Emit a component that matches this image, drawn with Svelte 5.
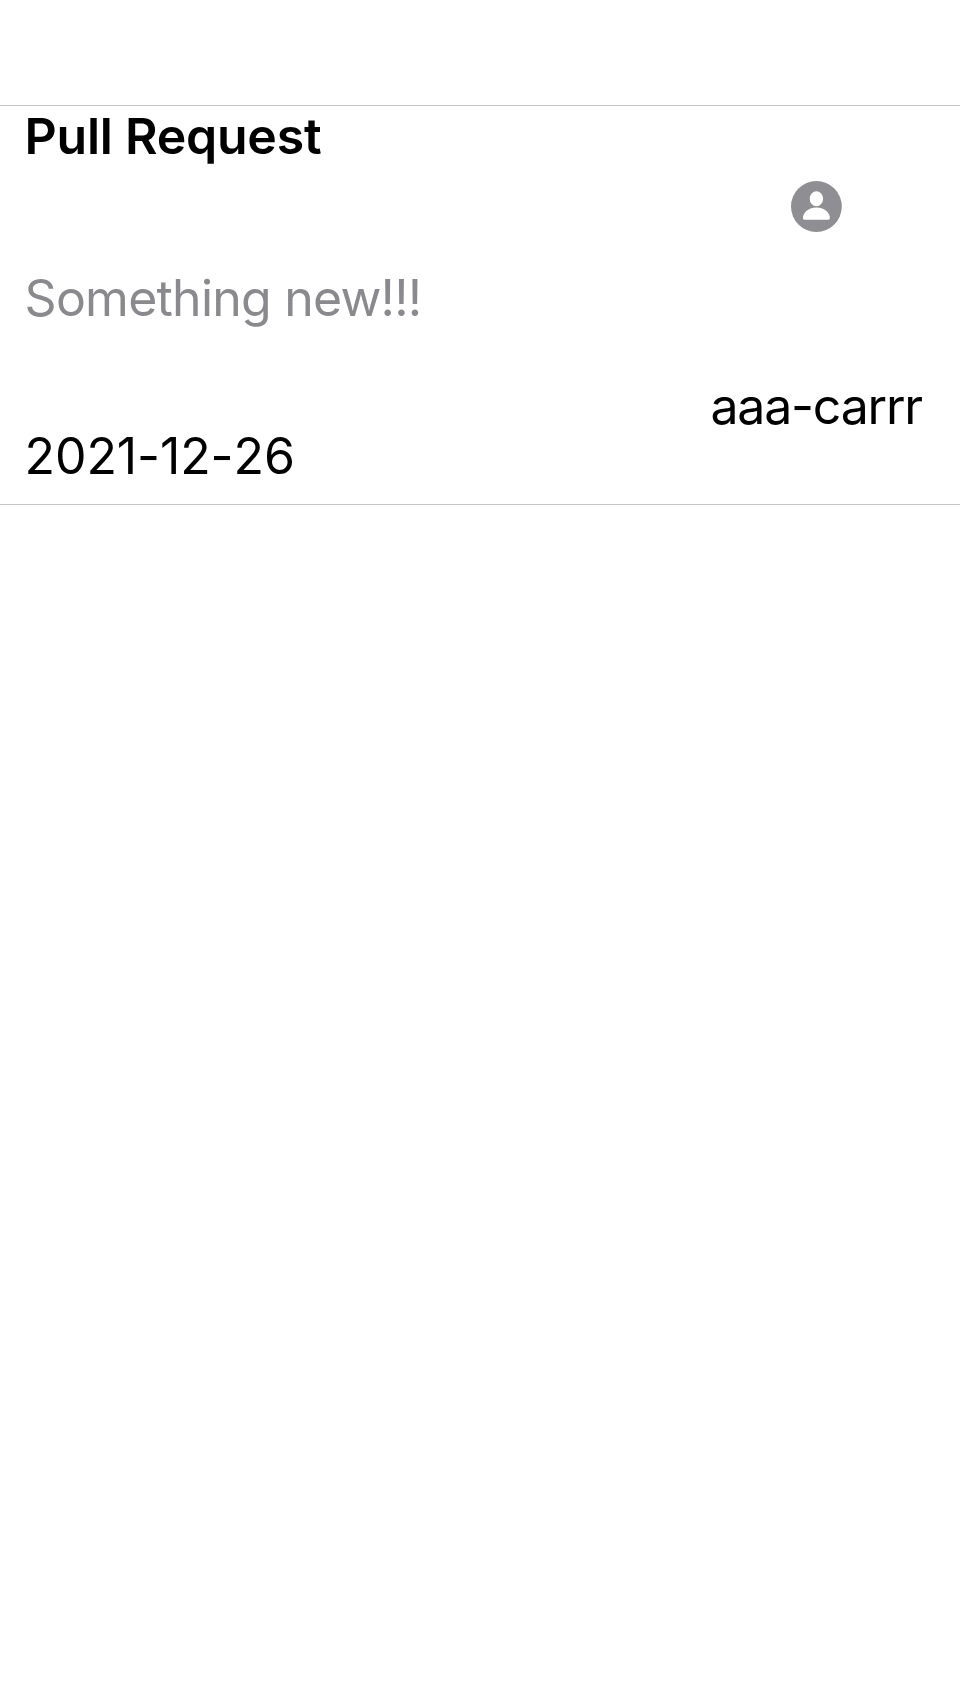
<script>
  const request = { title: 'Pull Request', body: 'Something new!!!', date: '2021-12-26', author: 'aaa-carrr' };
</script>

<main>
  <article>
    <section class="details">
      <h1><span>{request.title}</span></h1>
      <p><span>{request.body}</span></p>
      <time><span>{request.date}</span></time>
    </section>
    <section class="author">
      <svg viewBox="-0.9 0 52 52" aria-hidden="true">
        <circle cx="25.5" cy="25.5" r="25.4" />
        <ellipse class="person" cx="25.5" cy="17.8" rx="6.7" ry="7.5" />
        <path class="person" d="M12 36.8C12 32.7 16.5 26.5 25.5 26.5S39 32.7 39 36.8Q39 38.7 37.5 38.7H13.5Q12 38.7 12 36.8Z" />
      </svg>
      <span class="name">{request.author}</span>
    </section>
  </article>
</main>

<style>
  :global(body) { background: #fff; }
  main { box-sizing: border-box; min-height: 1704px; padding-top: 105px; font-family: Inter, sans-serif; color: #000; font-feature-settings: "calt" 0; }
  article { box-sizing: border-box; height: 400px; border-top: 1px solid #c6c6c8; border-bottom: 1px solid #c6c6c8; display: flex; justify-content: space-between; padding: 0 38px 0 24.6px; }
  .details { display: flex; flex-direction: column; }
  h1, p, time { margin: 0; font-size: 50px; line-height: 60px; white-space: nowrap; font-weight: 400; }
  h1 { font-weight: 600; letter-spacing: -0.25px; }
  p { margin-top: 102px; color: #8a8a8e; letter-spacing: -0.77px; }
  time { margin-top: 98px; font-kerning: none; letter-spacing: -0.1px; }
  .author { display: flex; flex-direction: column; align-items: center; padding-top: 75px; }
  svg { width: 52px; height: 52px; fill: #8e8e93; overflow: visible; }
  .person { fill: #fff; }
  .name { margin-top: 143px; font-size: 50px; line-height: 60px; white-space: nowrap; letter-spacing: -1.2px; }
</style>
